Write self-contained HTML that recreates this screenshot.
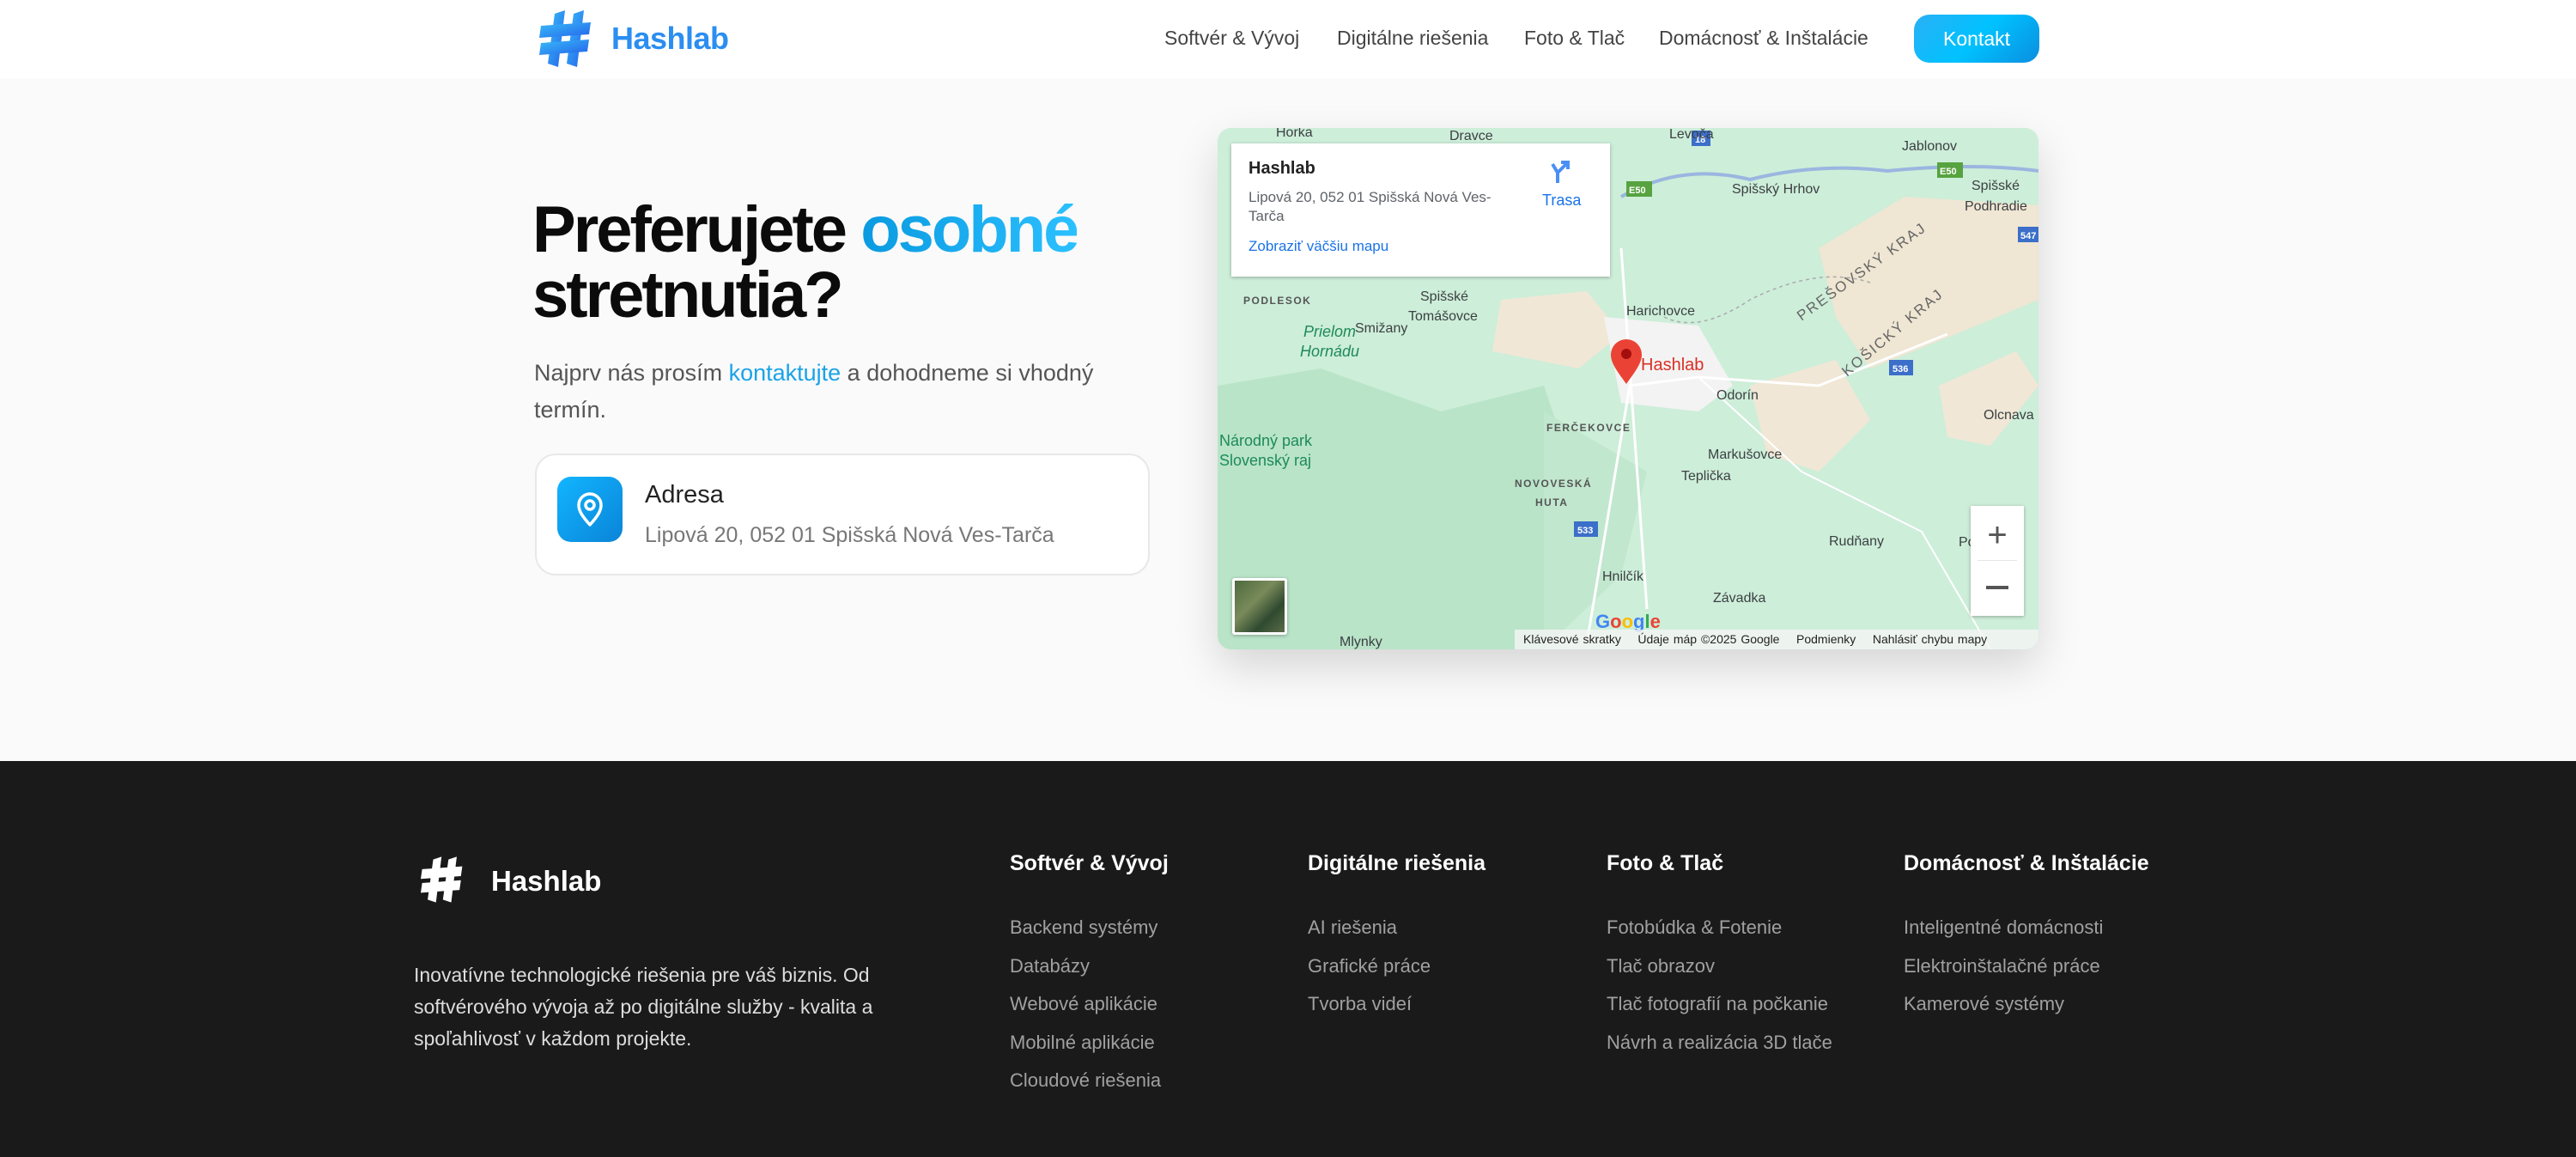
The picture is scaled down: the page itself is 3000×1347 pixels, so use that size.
<!DOCTYPE html>
<html><head><meta charset="utf-8">
<style>
*{margin:0;padding:0;box-sizing:border-box}
body{width:3000px;height:1347px;position:relative;overflow:hidden;font-family:"Liberation Sans",sans-serif;background:#fafafa}
.a{position:absolute;white-space:nowrap}
header{position:absolute;left:0;top:0;width:3000px;height:92px;background:#fff}
.nav{font-size:23px;color:#444;top:31px}
footer{position:absolute;left:0;top:886px;width:3000px;height:461px;background:#1a1a1a}
.fh{font-size:25px;color:#fff;font-weight:bold;top:991px}
.fl{font-size:22px;color:#a0a0a0}
</style></head><body>
<header>
<svg class="a" style="left:628px;top:12px" width="62" height="66" viewBox="0 0 62 66">
<defs><linearGradient id="g1" x1="0" y1="0" x2="1" y2="1"><stop offset="0" stop-color="#38bdf8"/><stop offset="1" stop-color="#2563eb"/></linearGradient></defs>
<g fill="url(#g1)"><polygon points="18,4 30,0 22,66 10,62"/><polygon points="40,4 52,0 44,66 32,62"/><polygon points="2,18 60,14 58,28 0,32"/><polygon points="2,38 58,34 56,48 0,52"/></g></svg>
<div class="a" style="left:712px;top:24px;font-size:36px;font-weight:bold;color:#2b8ef0;letter-spacing:-0.5px">Hashlab</div>
<div class="a nav" style="left:1356px">Softvér &amp; Vývoj</div>
<div class="a nav" style="left:1557px">Digitálne riešenia</div>
<div class="a nav" style="left:1775px">Foto &amp; Tlač</div>
<div class="a nav" style="left:1932px">Domácnosť &amp; Inštalácie</div>
<div class="a" style="left:2229px;top:17px;width:146px;height:56px;border-radius:18px;background:linear-gradient(135deg,#2ab0f5,#00c2ff 50%,#0a8ee0);color:#fff;font-size:23px;text-align:center;line-height:56px">Kontakt</div>
</header>

<div class="a" style="left:620px;top:230px;font-size:76px;font-weight:bold;color:#0b0b0b;letter-spacing:-3px;line-height:76px">Preferujete <span style="background:linear-gradient(90deg,#0a9ae0,#2bc0ff);-webkit-background-clip:text;color:transparent">osobné</span><br>stretnutia?</div>
<div class="a" style="left:622px;top:413px;font-size:27px;color:#555;line-height:43px;white-space:normal;width:720px">Najprv nás prosím <span style="color:#1aa3e8">kontaktujte</span> a dohodneme si vhodný termín.</div>
<div class="a" style="left:623px;top:528px;width:716px;height:142px;background:#fff;border:2px solid #e8e8e8;border-radius:24px"></div>
<div class="a" style="left:649px;top:555px;width:76px;height:76px;border-radius:16px;background:linear-gradient(135deg,#12b5ff,#0a84d8)"></div>
<svg class="a" style="left:667px;top:571px" width="40" height="44" viewBox="0 0 40 44"><path d="M20 40 C10 29 7 23 7 17 A13 13 0 0 1 33 17 C33 23 30 29 20 40Z" fill="none" stroke="#fff" stroke-width="3.5" stroke-linejoin="round"/><circle cx="20" cy="17" r="5" fill="none" stroke="#fff" stroke-width="3.5"/></svg>
<div class="a" style="left:751px;top:560px;font-size:29px;color:#222">Adresa</div>
<div class="a" style="left:751px;top:609px;font-size:25px;color:#777">Lipová 20, 052 01 Spišská Nová Ves-Tarča</div>

<div class="a" style="left:1418px;top:149px;width:956px;height:607px;border-radius:16px;overflow:hidden;box-shadow:0 20px 50px rgba(0,0,0,.15);background:#cfeedb">
<svg width="956" height="607" viewBox="0 0 956 607" style="position:absolute;left:0;top:0">
<rect width="956" height="607" fill="#cdeed9"/>
<path d="M0 300 L120 280 L260 330 L380 300 L420 420 L380 607 L0 607Z" fill="#b9e4c8"/>
<path d="M380 330 L500 400 L470 520 L380 607Z" fill="#c1e7ce"/>
<path d="M330 200 L430 190 L470 240 L420 280 L320 260Z" fill="#f1e7d6"/>
<path d="M450 220 L560 230 L600 300 L560 330 L470 320Z" fill="#f3f3f3"/>
<path d="M620 300 L720 270 L760 340 L700 400 L640 380Z" fill="#f1e7d6"/>
<path d="M700 140 L800 80 L956 90 L956 200 L860 240 L760 280 L720 220Z" fill="#efe6d3"/>
<path d="M840 300 L930 260 L956 300 L900 370 L850 360Z" fill="#f1e7d6"/>
<path d="M470 80 Q540 40 620 60 Q700 40 780 50 Q880 40 956 50" fill="none" stroke="#9ab6e0" stroke-width="4"/>
<path d="M470 140 L500 560" fill="none" stroke="#fff" stroke-width="3"/>
<path d="M430 600 L480 300 L560 290 L700 300 L850 240" fill="none" stroke="#fff" stroke-width="3"/>
<path d="M560 290 L680 400 L820 470 L900 607" fill="none" stroke="#fff" stroke-width="2"/>
<path d="M520 220 Q560 240 620 200 Q700 160 760 180" fill="none" stroke="#aaa" stroke-width="1.5" stroke-dasharray="4 4"/>
<g font-family="Liberation Sans,sans-serif" font-size="11" font-weight="bold" fill="#fff">
<rect x="413" y="120" width="28" height="18" fill="#3b6fc9"/><text x="417" y="134">533</text>
<rect x="415" y="458" width="28" height="18" fill="#3b6fc9"/><text x="419" y="472">533</text>
<rect x="552" y="3" width="22" height="18" fill="#3b6fc9"/><text x="556" y="17">18</text>
<rect x="476" y="62" width="30" height="18" fill="#56a33f"/><text x="479" y="76">E50</text>
<rect x="838" y="40" width="30" height="18" fill="#56a33f"/><text x="841" y="54">E50</text>
<rect x="932" y="115" width="24" height="18" fill="#3b6fc9"/><text x="935" y="129">547</text>
<rect x="782" y="270" width="28" height="18" fill="#3b6fc9"/><text x="786" y="284">536</text>
</g>
<g font-family="Liberation Sans,sans-serif" font-size="16" fill="#3c4043">
<text x="68" y="10">Horka</text><text x="270" y="14">Dravce</text><text x="526" y="12">Levoča</text>
<text x="797" y="26">Jablonov</text><text x="599" y="76">Spišský Hrhov</text>
<text x="878" y="72">Spišské</text><text x="870" y="96">Podhradie</text>
<text x="236" y="201">Spišské</text><text x="222" y="224">Tomášovce</text>
<text x="160" y="238">Smižany</text><text x="476" y="218">Harichovce</text>
<text x="581" y="316">Odorín</text><text x="892" y="339">Olcnava</text>
<text x="571" y="385">Markušovce</text><text x="540" y="410">Teplička</text>
<text x="712" y="486">Rudňany</text><text x="863" y="487">Poráč</text>
<text x="448" y="527">Hnilčík</text><text x="577" y="552">Závadka</text><text x="142" y="603">Mlynky</text>
</g>
<g font-family="Liberation Sans,sans-serif" font-size="12" font-weight="bold" fill="#555" letter-spacing="1.5">
<text x="30" y="205">PODLESOK</text><text x="383" y="353">FERČEKOVCE</text>
<text x="346" y="418">NOVOVESKÁ</text><text x="370" y="440">HUTA</text>
</g>
<g font-family="Liberation Sans,sans-serif" font-size="18" fill="#1e8a5a">
<text x="100" y="243" font-style="italic">Prielom</text><text x="96" y="266" font-style="italic">Hornádu</text>
<text x="2" y="370">Národný park</text><text x="2" y="393">Slovenský raj</text>
</g>
<g font-family="Liberation Sans,sans-serif" font-size="17" fill="#666" letter-spacing="2">
<text transform="translate(680,225) rotate(-36)">PREŠOVSKÝ KRAJ</text>
<text transform="translate(733,290) rotate(-40)">KOŠICKÝ KRAJ</text>
</g>
<path d="M476 298 C466 284 458 274 458 264 A18 18 0 0 1 494 264 C494 274 486 284 476 298Z" fill="#ea4335"/>
<circle cx="476" cy="263" r="6" fill="#a50e0e"/>
<text x="493" y="282" font-family="Liberation Sans,sans-serif" font-size="20" fill="#d93025">Hashlab</text>
<text x="440" y="582" font-family="Liberation Sans,sans-serif" font-size="22" font-weight="bold"><tspan fill="#4285f4">G</tspan><tspan fill="#ea4335">o</tspan><tspan fill="#fbbc05">o</tspan><tspan fill="#4285f4">g</tspan><tspan fill="#34a853">l</tspan><tspan fill="#ea4335">e</tspan></text>
</svg>
<div class="a" style="left:16px;top:18px;width:441px;height:155px;background:#fff;box-shadow:0 1px 4px rgba(0,0,0,.3)">
<div class="a" style="left:20px;top:18px;font-size:20px;font-weight:bold;color:#222">Hashlab</div>
<div class="a" style="left:20px;top:52px;font-size:17px;color:#5f6368;line-height:22px">Lipová 20, 052 01 Spišská Nová Ves-<br>Tarča</div>
<svg class="a" style="left:370px;top:18px" width="30" height="30" viewBox="0 0 30 30"><path d="M10 28 V16 L4 6 M10 16 L20 6 M14 4 H22 V12" fill="none" stroke="#4a8ff5" stroke-width="4"/></svg>
<div class="a" style="left:362px;top:56px;font-size:18px;color:#1a73e8">Trasa</div>
<div class="a" style="left:20px;top:110px;font-size:17px;color:#1a73e8">Zobraziť väčšiu mapu</div>
</div>
<div class="a" style="left:17px;top:524px;width:64px;height:66px;border:3px solid #fff;border-radius:3px;background:linear-gradient(135deg,#4c6a3e,#7a8a5a 40%,#2f4a30 70%,#5a6b48);box-shadow:0 1px 4px rgba(0,0,0,.3)"></div>
<div class="a" style="left:877px;top:440px;width:62px;height:128px;background:#fff;box-shadow:0 1px 4px rgba(0,0,0,.3)">
<div class="a" style="left:0;top:14px;width:62px;text-align:center;font-size:40px;color:#555;line-height:40px">+</div>
<div class="a" style="left:8px;top:63px;width:46px;height:1px;background:#e6e6e6"></div>
<div class="a" style="left:18px;top:93px;width:26px;height:4px;background:#555"></div>
</div>
<div class="a" style="left:346px;top:584px;width:610px;height:23px;background:rgba(245,245,245,.8);font-size:14px;color:#222;line-height:23px;padding-left:10px;word-spacing:1px">Klávesové skratky &nbsp;&nbsp; Údaje máp ©2025 Google &nbsp;&nbsp; Podmienky &nbsp;&nbsp; Nahlásiť chybu mapy</div>
</div>

<footer></footer>
<svg class="a" style="left:490px;top:992px" width="50" height="64" viewBox="0 0 62 66"><g fill="#fff"><polygon points="18,4 30,0 22,66 10,62"/><polygon points="40,4 52,0 44,66 32,62"/><polygon points="2,18 60,14 58,28 0,32"/><polygon points="2,38 58,34 56,48 0,52"/></g></svg>
<div class="a" style="left:572px;top:1007px;font-size:33px;font-weight:bold;color:#fff">Hashlab</div>
<div class="a" style="left:482px;top:1117px;font-size:23px;color:#ddd;line-height:37px">Inovatívne technologické riešenia pre váš biznis. Od<br>softvérového vývoja až po digitálne služby - kvalita a<br>spoľahlivosť v každom projekte.</div>
<div class="a fh" style="left:1176px">Softvér &amp; Vývoj</div>
<div class="a fh" style="left:1523px">Digitálne riešenia</div>
<div class="a fh" style="left:1871px">Foto &amp; Tlač</div>
<div class="a fh" style="left:2217px">Domácnosť &amp; Inštalácie</div>
<div class="a fl" style="left:1176px;top:1058px;line-height:44.5px">Backend systémy<br>Databázy<br>Webové aplikácie<br>Mobilné aplikácie<br>Cloudové riešenia</div>
<div class="a fl" style="left:1523px;top:1058px;line-height:44.5px">AI riešenia<br>Grafické práce<br>Tvorba videí</div>
<div class="a fl" style="left:1871px;top:1058px;line-height:44.5px">Fotobúdka &amp; Fotenie<br>Tlač obrazov<br>Tlač fotografií na počkanie<br>Návrh a realizácia 3D tlače</div>
<div class="a fl" style="left:2217px;top:1058px;line-height:44.5px">Inteligentné domácnosti<br>Elektroinštalačné práce<br>Kamerové systémy</div>
</body></html>
